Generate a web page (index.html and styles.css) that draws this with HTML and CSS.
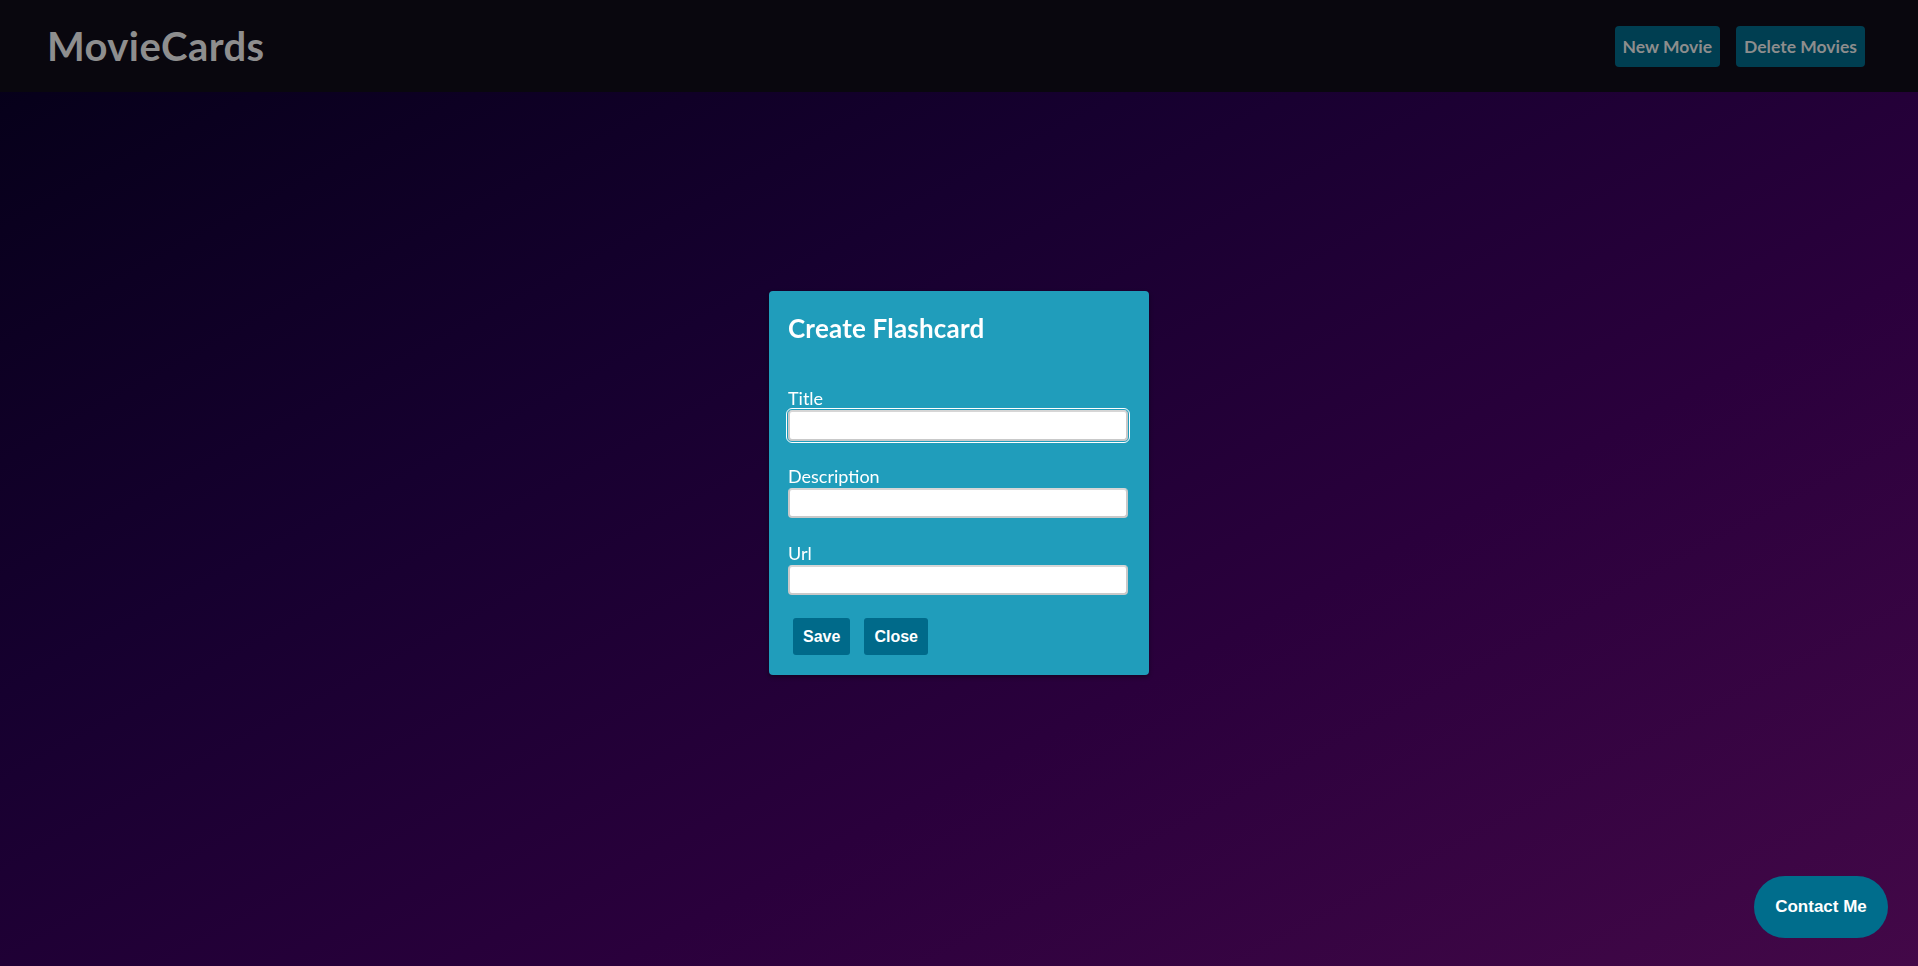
FILE: index.html
```html
<!DOCTYPE html>
<html lang="en">
<head>
<meta charset="utf-8">
<title>MovieCards</title>
<link rel="stylesheet" href="styles.css">
</head>
<body>
<header class="topbar">
  <h1 class="brand">MovieCards</h1>
  <nav class="actions">
    <button class="nav-btn">New Movie</button>
    <button class="nav-btn">Delete Movies</button>
  </nav>
</header>
<main class="stage"></main>

<div class="modal-overlay">
  <form class="card">
    <h2 class="card-title">Create Flashcard</h2>
    <div class="fields">
      <label class="field">
        <span class="field-label">Title</span>
        <input class="field-input focused" type="text">
      </label>
      <label class="field">
        <span class="field-label">Description</span>
        <input class="field-input" type="text">
      </label>
      <label class="field">
        <span class="field-label">Url</span>
        <input class="field-input" type="text">
      </label>
    </div>
    <div class="card-actions">
      <button type="button" class="card-btn">Save</button>
      <button type="button" class="card-btn">Close</button>
    </div>
  </form>
</div>

<button class="contact-btn">Contact Me</button>
</body>
</html>
```
FILE: styles.css
```css
* { box-sizing: border-box; }

html, body {
  margin: 0;
  height: 100%;
}

body {
  font-family: "Lato", "Open Sans", sans-serif;
  background: linear-gradient(152deg, #040017 0%, #16002f 35%, #2a003c 65%, #430848 100%);
  min-height: 966px;
  display: flex;
  flex-direction: column;
}

.topbar {
  height: 92px;
  background: #09070e;
  display: flex;
  align-items: center;
  justify-content: space-between;
  padding: 0 53px 0 47px;
}

.brand {
  margin: 0;
  font-family: "Lato", sans-serif;
  font-size: 40px;
  font-weight: 700;
  color: #8e8e8e;
  letter-spacing: 0.4px;
}

.actions {
  display: flex;
  gap: 16px;
}

.nav-btn {
  height: 41px;
  padding: 0 8px;
  border: none;
  border-radius: 4px;
  background: #003e51;
  color: #8d8d8d;
  font-family: "Lato", sans-serif;
  font-size: 17.5px;
  font-weight: 700;
}

.stage { flex: 1; }

.modal-overlay {
  position: fixed;
  inset: 0;
  display: flex;
  align-items: center;
  justify-content: center;
}

.card {
  width: 380px;
  background: #209dbb;
  border-radius: 4px;
  padding: 21px 20px 20px 19px;
  box-shadow: 0 2px 4px rgba(0, 0, 0, 0.4);
  display: flex;
  flex-direction: column;
}

.card-title {
  margin: 0;
  font-size: 26px;
  line-height: 32px;
  font-weight: 700;
  color: #ffffff;
  letter-spacing: 0.2px;
}

.fields {
  margin-top: 44px;
  display: flex;
  flex-direction: column;
  gap: 25px;
}

.field {
  display: flex;
  flex-direction: column;
  gap: 2px;
}

.field-label {
  font-size: 18px;
  line-height: 20px;
  color: #ffffff;
}

.field-input {
  width: 340px;
  height: 30px;
  border: 2px solid #c9c9c9;
  border-top-color: #d6d6d6;
  border-radius: 4px;
  background: #ffffff;
  font-size: 16px;
  padding: 0 6px;
}

.field-input.focused {
  height: 31px;
  outline: 1px solid #ffffff;
  outline-offset: 1px;
}

.card-actions {
  margin-top: 23px;
  padding-left: 5px;
  display: flex;
  gap: 14px;
}

.card-btn {
  height: 37px;
  padding: 0 10px;
  border: none;
  border-radius: 3px;
  background: #006a8a;
  color: #ffffff;
  font-family: "Liberation Sans", Arial, sans-serif;
  font-size: 16px;
  font-weight: 700;
}

.contact-btn {
  position: fixed;
  right: 30px;
  bottom: 28px;
  width: 134px;
  height: 62px;
  border: none;
  border-radius: 31px;
  background: #006d8c;
  color: #ffffff;
  font-family: "Liberation Sans", Arial, sans-serif;
  font-size: 17px;
  font-weight: 700;
}
```
